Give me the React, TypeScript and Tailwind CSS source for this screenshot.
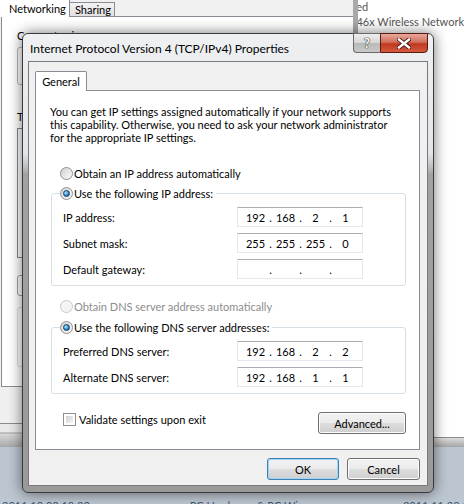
import { Fragment } from "react";

function Radio({ checked, disabled }: { checked?: boolean; disabled?: boolean }) {
  return (
    <span
      className={
        disabled
          ? "flex size-[13px] shrink-0 items-center justify-center rounded-full border border-[#c8c8c8] bg-[#f4f4f4]"
          : "flex size-[13px] shrink-0 items-center justify-center rounded-full border border-[#8e8f8f] bg-gradient-to-br from-[#d2d2d2] to-[#fbfbfb]"
      }
    >
      {checked && (
        <span className="size-[7px] rounded-full border border-[#1b3d63] bg-[radial-gradient(circle_at_35%_35%,#b6ecff,#2c8ad0_55%,#124e86)]" />
      )}
    </span>
  );
}

function IpField({ v }: { v?: string[] }) {
  const parts = v ?? ["", "", "", ""];
  return (
    <div className="flex h-[20px] w-[126px] items-center border border-[#e3e9ef] border-t-[#abadb3] bg-white pl-[5px]">
      {parts.map((p, i) => (
        <Fragment key={i}>
          {i > 0 && <span className="w-[5px] text-center">.</span>}
          <span className="w-[25px] text-center">{p}</span>
        </Fragment>
      ))}
    </div>
  );
}

function Row({ label, v }: { label: string; v?: string[] }) {
  return (
    <div className="flex items-center">
      <span className="w-[177px] pl-[3px]">{label}</span>
      <IpField v={v} />
    </div>
  );
}

function WinButton({ label, primary, w }: { label: string; primary?: boolean; w: string }) {
  return (
    <button
      className={
        (primary
          ? "border-[#3c7fb1] shadow-[inset_0_0_0_1px_#9fd6f5] "
          : "border-[#707070] shadow-[inset_0_0_0_1px_#fcfcfc] ") +
        w +
        " h-[22px] rounded-[3px] border bg-[linear-gradient(#f2f2f2_0%,#ebebeb_50%,#dddddd_51%,#cfcfcf_100%)] text-[11px] text-black"
      }
    >
      {label}
    </button>
  );
}

function BackWindows() {
  return (
    <div className="flex flex-col">
      <div className="flex h-[447px]">
        {/* properties window behind */}
        <div className="flex w-[357px] flex-col bg-[#f0f0f0]">
          <div className="flex h-[17px] items-end">
            <div className="flex h-[17px] w-[70px] items-center border-r border-[#898c95] bg-white pl-[9px]">Networking</div>
            <div className="flex h-[15px] w-[45px] items-center border-r border-t border-b border-[#898c95] bg-gradient-to-b from-[#f3f3f3] to-[#e1e1e1] pl-[5px]">
              Sharing
            </div>
            <div className="h-[17px] flex-1 border-b border-[#898c95]" />
          </div>
          <div className="ml-[1px] flex h-[370px] flex-col border-b border-l border-[#898c95] bg-white pl-[15px] pt-[11px]">
            <span>Connect using:</span>
            <div className="mt-[4px] h-[38px] w-[331px] rounded-[3px] border border-[#b5b5b5]" />
            <span className="mt-[24px]">This connection uses the following items:</span>
            <div className="mt-[4px] h-[130px] w-[320px] border border-[#828790]" />
            <div className="mt-[17px] h-[21px] w-[80px] rounded-[3px] border border-[#a0a0a0]" />
            <div className="mt-[11px] h-[60px] w-[320px] rounded-[3px] border border-[#d5dfe5]" />
          </div>
          <div className="flex-1" />
          <div className="h-[24px] border-t border-[#8a8a8a] bg-[linear-gradient(#e9e9e9_0px,#e9e9e9_8px,#9c9c9c_9px,#d7d7d7_10px,#a8a8a8_100%)]" />
        </div>
        {/* explorer window behind */}
        <div className="flex flex-1 flex-col border-l-[5px] border-[#a9a9a9] bg-white">
          <div className="flex flex-1 flex-col overflow-hidden whitespace-nowrap text-[#555]">
            <span className="-ml-[43px] -mt-[1px]">Connected</span>
            <span className="-ml-[2px]">46x Wireless Network</span>
          </div>
          <div className="h-[10px] border-t border-[#8a8a8a] bg-gradient-to-b from-[#dcdcdc] to-[#a5a5a5]" />
        </div>
      </div>
      <div className="flex h-[57px] items-end gap-[100px] whitespace-nowrap pl-[2px] text-[#3e5873]">
        <span className="translate-y-[9px]">2011 10 02 18:22</span>
        <span className="translate-y-[9px]">PC Hardware &amp; PC Wiz</span>
        <span className="translate-y-[9px]">2011 11 28 12:37</span>
      </div>
    </div>
  );
}

function Dialog() {
  return (
    <div className="absolute left-[22px] top-[33px] flex w-[412px] flex-col rounded-[6px] border border-[#3a3a3a] bg-[linear-gradient(#eef0f2_0px,#e2e5e8_120px,#b9bcbf_134px,#a2a2a2_140px,#9a9a9a_100%)] px-[5px] pb-[6px] shadow-[0_0_14px_rgba(0,0,0,0.55)]">
      <div className="flex h-[27px] items-start">
        <span className="flex-1 pl-[2px] pt-[7px] text-[12px] text-black">Internet Protocol Version 4 (TCP/IPv4) Properties</span>
        <div className="-mt-[1px] flex">
          <div className="flex h-[20px] w-[27px] items-center justify-center rounded-bl-[4px] border border-r-0 border-[#6a6a6a] bg-[linear-gradient(#eeeeee_0%,#d6d6d6_50%,#b8b8b8_51%,#c9c9c9_100%)]">
            <span className="text-[13px] font-bold text-white [text-shadow:0_0_1px_#333,0_0_1px_#333,0_0_1px_#333]">?</span>
          </div>
          <div className="flex h-[20px] w-[48px] items-center justify-center rounded-br-[4px] border border-[#5a1a10] bg-[linear-gradient(#e8a89b_0%,#d26f5c_45%,#c0391f_55%,#d35a3e_100%)]">
            <svg width="14" height="11" viewBox="0 0 14 11">
              <path d="M2 1.5 L12 9.5 M12 1.5 L2 9.5" stroke="#3a1a14" strokeWidth="4.2" strokeLinecap="square" />
              <path d="M2 1.5 L12 9.5 M12 1.5 L2 9.5" stroke="#ffffff" strokeWidth="2.4" strokeLinecap="square" />
            </svg>
          </div>
        </div>
      </div>
      <div className="flex h-[425px] flex-col border border-[#7a7a7a] bg-[#f0f0f0] px-[6px] pt-[9px]">
        <div className="relative z-10 -mb-[1px] flex h-[20px] w-[52px] items-center justify-center rounded-t-[2px] border border-b-0 border-[#898c95] bg-white">
          General
        </div>
        <div className="flex h-[360px] w-[385px] flex-col border border-[#898c95] bg-white pt-[14px]">
          <p className="whitespace-nowrap pl-[14px] leading-[13px]">
            You can get IP settings assigned automatically if your network supports
            <br />
            this capability. Otherwise, you need to ask your network administrator
            <br />
            for the appropriate IP settings.
          </p>
          <div className="mt-[22px] flex h-[15px] items-center gap-[1px] pl-[24px]">
            <Radio />
            <span>Obtain an IP address automatically</span>
          </div>
          <fieldset className="ml-[15px] mt-[5px] w-[355px] rounded-[3px] border border-[#d5dfe5] px-[8px] pb-[6px]">
            <legend className="flex h-[15px] items-center gap-[1px] pr-[3px]">
              <Radio checked />
              <span>Use the following IP address:</span>
            </legend>
            <div className="flex flex-col gap-[6px] pt-[6px]">
              <Row label="IP address:" v={["192", "168", "2", "1"]} />
              <Row label="Subnet mask:" v={["255", "255", "255", "0"]} />
              <Row label="Default gateway:" />
            </div>
          </fieldset>
          <div className="mt-[13px] flex h-[15px] items-center gap-[1px] pl-[24px] text-[#8d8d8d]">
            <Radio disabled />
            <span>Obtain DNS server address automatically</span>
          </div>
          <fieldset className="ml-[15px] mt-[6px] w-[355px] rounded-[3px] border border-[#d5dfe5] px-[8px] pb-[6px]">
            <legend className="flex h-[15px] items-center gap-[1px] pr-[3px]">
              <Radio checked />
              <span>Use the following DNS server addresses:</span>
            </legend>
            <div className="flex flex-col gap-[6px] pt-[6px]">
              <Row label="Preferred DNS server:" v={["192", "168", "2", "2"]} />
              <Row label="Alternate DNS server:" v={["192", "168", "1", "1"]} />
            </div>
          </fieldset>
          <div className="mt-[18px] flex items-start justify-between pl-[27px] pr-[13px]">
            <div className="flex items-center gap-[3px]">
              <span className="size-[13px] border border-[#8f8f8f] bg-white p-[2px]">
                <span className="block size-full bg-gradient-to-br from-[#cfcfcf] to-[#f7f7f7]" />
              </span>
              <span>Validate settings upon exit</span>
            </div>
            <WinButton label="Advanced..." w="w-[88px]" />
          </div>
        </div>
        <div className="mt-[8px] flex justify-end gap-[8px] pr-[1px]">
          <WinButton label="OK" primary w="w-[72px]" />
          <WinButton label="Cancel" w="w-[73px]" />
        </div>
      </div>
    </div>
  );
}

export default function App() {
  return (
    <div className="relative h-[504px] w-[464px] overflow-hidden bg-[#bcc6d0] font-['Lato','Liberation_Sans',sans-serif] text-[11px] leading-[15px] text-black">
      <BackWindows />
      <Dialog />
    </div>
  );
}
